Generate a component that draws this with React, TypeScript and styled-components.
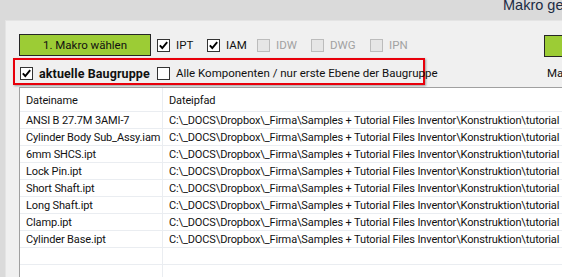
import React from "react";
import styled, { createGlobalStyle } from "styled-components";

const GlobalStyle = createGlobalStyle`
  html, body { margin: 0; padding: 0; }
  body {
    background: #dadada;
    font-family: Roboto, "Liberation Sans", Arial, sans-serif;
    font-size: 11px;
    color: #000;
  }
`;

const Window = styled.div`
  width: 562px;
  height: 277px;
  overflow: hidden;
  background: #dadada;
  display: flex;
  flex-direction: column;
`;

const TitleBar = styled.div`
  height: 20px;
  flex: none;
  display: flex;
  align-items: flex-end;
  padding-left: 503px;
  white-space: nowrap;
`;

const Title = styled.span`
  font-family: "Liberation Sans", Arial, sans-serif;
  font-size: 14.5px;
  line-height: 14px;
  color: #1c2c44;
  transform: translateY(-8px);
`;

const Panel = styled.div`
  flex: 1;
  margin-left: 5px;
  background: #f0f0f0;
  border-top: 1px solid #e4e4e4;
  border-left: 1px solid #e4e4e4;
  padding: 13px 0 0 13px;
  display: flex;
  flex-direction: column;
  min-height: 0;
`;

const TopArea = styled.div`
  display: flex;
  gap: 18px;
`;

const LeftCol = styled.div`
  width: 507px;
  flex: none;
  display: flex;
  flex-direction: column;
  gap: 2px;
`;

const RightCol = styled.div`
  display: flex;
  flex-direction: column;
  gap: 9px;
  padding-top: 1px;
  white-space: nowrap;
`;

const Toolbar = styled.div`
  display: flex;
  align-items: center;
  height: 22px;
`;

const GreenButton = styled.button`
  width: 132px;
  height: 22px;
  flex: none;
  background: #9ccc35;
  border: 1px solid #262626;
  padding: 0;
  font-family: Roboto, "Liberation Sans", Arial, sans-serif;
  font-size: 11.5px;
  color: #111;
  text-align: center;
  white-space: nowrap;
`;

const CheckGroup = styled.div`
  display: flex;
  align-items: center;
  margin-left: 6px;
`;

const CheckItem = styled.label<{ $w?: number; $dim?: boolean }>`
  display: flex;
  align-items: center;
  gap: 6px;
  flex: none;
  width: ${(p) => (p.$w ? `${p.$w}px` : "auto")};
  color: ${(p) => (p.$dim ? "#a2a2a2" : "#111")};
  font-size: 11.5px;
  white-space: nowrap;
`;

const Box = styled.span<{ $dim?: boolean }>`
  width: 13px;
  height: 13px;
  box-sizing: border-box;
  flex: none;
  border: 1px solid ${(p) => (p.$dim ? "#bcbcbc" : "#333")};
  background: ${(p) => (p.$dim ? "#e6e6e6" : "#fff")};
  display: flex;
  align-items: center;
  justify-content: center;
`;

const Highlight = styled.div`
  margin-left: -6px;
  width: 412px;
  height: 27px;
  box-sizing: border-box;
  border: 2px solid #e8000b;
  box-shadow: 1px 1px 2px rgba(0, 0, 0, 0.35);
  padding: 6px 5px 0 5px;
  display: flex;
  align-items: flex-start;
`;

const BoldText = styled.span`
  font-weight: 700;
  font-size: 12.5px;
  letter-spacing: 0.1px;
`;

const SideLabel = styled.span`
  font-size: 11.5px;
  color: #111;
  padding-left: 3px;
`;

const Grid = styled.div`
  margin-top: 2px;
  flex: 1;
  width: 620px;
  background: #fff;
  border-top: 1px solid #a0a0a0;
  border-left: 1px solid #a0a0a0;
  display: grid;
  grid-template-columns: 143px 1fr;
  grid-auto-rows: 17px;
  grid-template-rows: 24px;
  align-content: start;
`;

const Cell = styled.div`
  box-sizing: border-box;
  border-bottom: 1px solid #eaedf1;
  border-right: 1px solid #eaedf1;
  padding-left: 6px;
  padding-top: 1px;
  display: flex;
  align-items: center;
  white-space: nowrap;
  overflow: hidden;
  font-size: 11px;
  letter-spacing: -0.13px;
  color: #111;
`;

const Check = () => (
  <svg width="11" height="11" viewBox="0 0 11 11">
    <path d="M1.8 5.4 L4.3 8 L9.2 2.2" fill="none" stroke="#000" strokeWidth="1.9" />
  </svg>
);

const CheckBox = ({ checked, dim }: { checked?: boolean; dim?: boolean }) => (
  <Box $dim={dim}>{checked ? <Check /> : null}</Box>
);

const path = "C:\\_DOCS\\Dropbox\\_Firma\\Samples + Tutorial Files Inventor\\Konstruktion\\tutorial";

const files = [
  "ANSI B 27.7M 3AMI-7",
  "Cylinder Body Sub_Assy.iam",
  "6mm SHCS.ipt",
  "Lock Pin.ipt",
  "Short Shaft.ipt",
  "Long Shaft.ipt",
  "Clamp.ipt",
  "Cylinder Base.ipt",
];

const types: { name: string; checked: boolean; dim: boolean; w: number }[] = [
  { name: "IPT", checked: true, dim: false, w: 50 },
  { name: "IAM", checked: true, dim: false, w: 50 },
  { name: "IDW", checked: false, dim: true, w: 54 },
  { name: "DWG", checked: false, dim: true, w: 59 },
  { name: "IPN", checked: false, dim: true, w: 50 },
];

export default function App() {
  return (
    <>
      <GlobalStyle />
      <Window>
        <TitleBar>
          <Title>Makro generieren</Title>
        </TitleBar>
        <Panel>
          <TopArea>
            <LeftCol>
              <Toolbar>
                <GreenButton>1. Makro wählen</GreenButton>
                <CheckGroup>
                  {types.map((t) => (
                    <CheckItem key={t.name} $w={t.w} $dim={t.dim}>
                      <CheckBox checked={t.checked} dim={t.dim} />
                      {t.name}
                    </CheckItem>
                  ))}
                </CheckGroup>
              </Toolbar>
              <Highlight>
                <CheckItem $w={137}>
                  <CheckBox checked />
                  <BoldText>aktuelle Baugruppe</BoldText>
                </CheckItem>
                <CheckItem>
                  <CheckBox />
                  Alle Komponenten / nur erste Ebene der Baugruppe
                </CheckItem>
              </Highlight>
            </LeftCol>
            <RightCol>
              <GreenButton>2. Makro starten</GreenButton>
              <SideLabel>Makro</SideLabel>
            </RightCol>
          </TopArea>
          <Grid>
            <Cell>Dateiname</Cell>
            <Cell>Dateipfad</Cell>
            {files.map((f) => (
              <React.Fragment key={f}>
                <Cell>{f}</Cell>
                <Cell>{path}</Cell>
              </React.Fragment>
            ))}
            <Cell />
            <Cell />
            <Cell />
            <Cell />
          </Grid>
        </Panel>
      </Window>
    </>
  );
}
